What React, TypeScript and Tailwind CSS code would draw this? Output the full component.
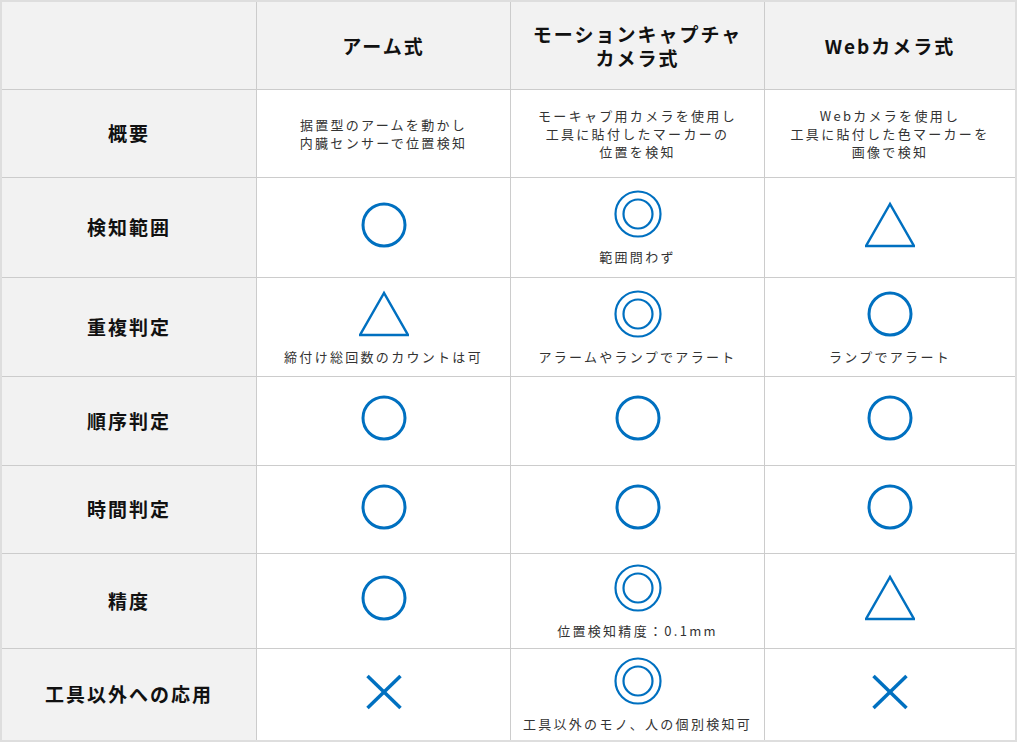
import React from "react";

const BLUE = "#0070c0";

type Mark = "o" | "oo" | "tri" | "x";

function Icon({ m }: { m: Mark }) {
  return (
    <svg width="50" height="50" viewBox="0 0 50 50" fill="none" stroke={BLUE}>
      {m === "o" && <circle cx="25" cy="25" r="21" strokeWidth="3" />}
      {m === "oo" && (
        <>
          <circle cx="25" cy="25" r="22.5" strokeWidth="2.2" />
          <circle cx="25" cy="25" r="14.5" strokeWidth="2.2" />
        </>
      )}
      {m === "tri" && (
        <polygon points="25,4 1,46 49,46" strokeWidth="2.5" strokeLinejoin="miter" />
      )}
      {m === "x" && (
        <>
          <line x1="8.5" y1="9" x2="41.5" y2="41" strokeWidth="3.5" />
          <line x1="41.5" y1="9" x2="8.5" y2="41" strokeWidth="3.5" />
        </>
      )}
    </svg>
  );
}

type Cell = { m: Mark; c?: string };

const rows: { label: string; h: string; cells: (Cell | string)[] }[] = [
  {
    label: "概要",
    h: "h-[88px]",
    cells: [
      "据置型のアームを動かし\n内臓センサーで位置検知",
      "モーキャプ用カメラを使用し\n工具に貼付したマーカーの\n位置を検知",
      "Webカメラを使用し\n工具に貼付した色マーカーを\n画像で検知",
    ],
  },
  {
    label: "検知範囲",
    h: "h-[100px]",
    cells: [{ m: "o" }, { m: "oo", c: "範囲問わず" }, { m: "tri" }],
  },
  {
    label: "重複判定",
    h: "h-[99px]",
    cells: [
      { m: "tri", c: "締付け総回数のカウントは可" },
      { m: "oo", c: "アラームやランプでアラート" },
      { m: "o", c: "ランプでアラート" },
    ],
  },
  {
    label: "順序判定",
    h: "h-[89px]",
    cells: [{ m: "o" }, { m: "o" }, { m: "o" }],
  },
  {
    label: "時間判定",
    h: "h-[88px]",
    cells: [{ m: "o" }, { m: "o" }, { m: "o" }],
  },
  {
    label: "精度",
    h: "h-[95px]",
    cells: [{ m: "o" }, { m: "oo", c: "位置検知精度：0.1mm" }, { m: "tri" }],
  },
  {
    label: "工具以外への応用",
    h: "h-[91px]",
    cells: [{ m: "x" }, { m: "oo", c: "工具以外のモノ、人の個別検知可" }, { m: "x" }],
  },
];

const font = { fontFamily: '"Noto Sans CJK JP", "Noto Sans", sans-serif' };

export default function App() {
  const widths = ["w-[255px]", "w-[254px]", "w-[254px]", "w-[250px]"];
  return (
    <div className="bg-white w-[1020px] h-[743px]" style={font}>
      <div className="w-[1017px] h-[742px] border-2 border-[#dedede] flex flex-col">
        {/* header */}
        <div className="flex h-[88px] bg-[#f2f2f2] border-b border-[#cccccc]">
          <div className={`${widths[0]} border-r border-[#cccccc]`} />
          {["アーム式", "モーションキャプチャ\nカメラ式", "Webカメラ式"].map((t, i) => (
            <div
              key={i}
              className={`${widths[i + 1]} ${i < 2 ? "border-r border-[#cccccc]" : ""} flex items-center justify-center text-center whitespace-pre-line text-[19px] leading-[24px] font-bold tracking-[2px] text-[#111]`}
            >
              {t}
            </div>
          ))}
        </div>
        {rows.map((r, ri) => (
          <div
            key={ri}
            className={`flex ${r.h} ${ri < rows.length - 1 ? "border-b border-[#cccccc]" : ""}`}
          >
            <div
              className={`${widths[0]} bg-[#f2f2f2] border-r border-[#cccccc] flex items-center justify-center text-[19px] font-bold tracking-[2px] text-[#111]`}
            >
              {r.label}
            </div>
            {r.cells.map((cell, ci) => {
              const cls = `${widths[ci + 1]} ${ci < 2 ? "border-r border-[#cccccc]" : ""} bg-white flex flex-col items-center justify-center`;
              if (typeof cell === "string") {
                return (
                  <div key={ci} className={cls}>
                    <div className="text-center whitespace-pre-line text-[13px] leading-[18px] tracking-[2.3px] text-[#333]">
                      {cell}
                    </div>
                  </div>
                );
              }
              return (
                <div key={ci} className={`${cls} ${cell.c ? "" : "pb-[6px]"}`}>
                  <Icon m={cell.m} />
                  {cell.c && (
                    <div className="mt-[9px] text-[13px] leading-[18px] tracking-[2.3px] text-[#333] whitespace-nowrap">
                      {cell.c}
                    </div>
                  )}
                </div>
              );
            })}
          </div>
        ))}
      </div>
    </div>
  );
}
